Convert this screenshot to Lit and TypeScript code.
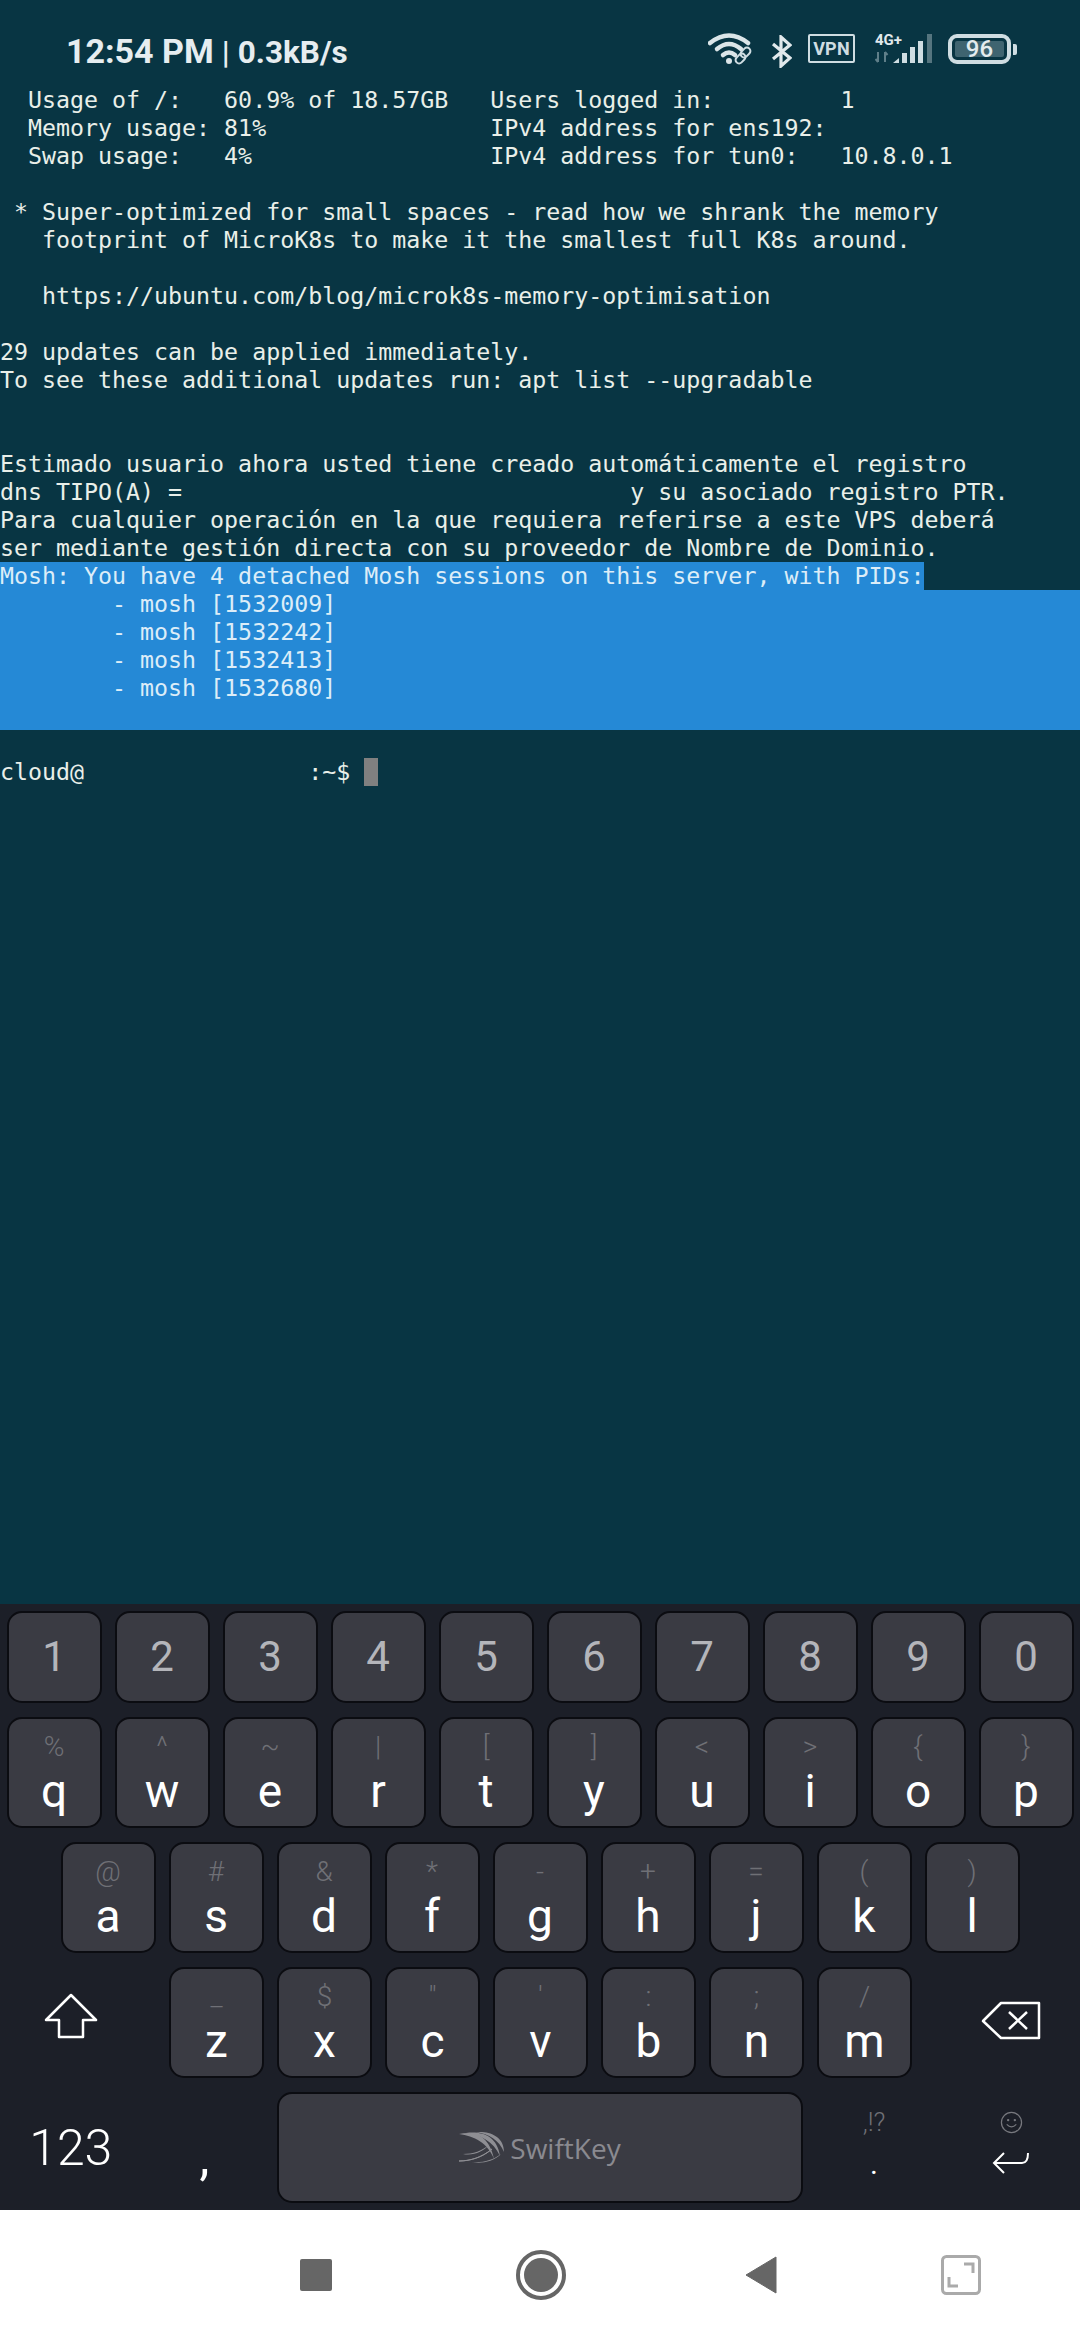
import { LitElement, html, css } from "lit";
import { customElement } from "lit/decorators.js";

const top = [
  "  Usage of /:   60.9% of 18.57GB   Users logged in:         1",
  "  Memory usage: 81%                IPv4 address for ens192:",
  "  Swap usage:   4%                 IPv4 address for tun0:   10.8.0.1",
  "",
  " * Super-optimized for small spaces - read how we shrank the memory",
  "   footprint of MicroK8s to make it the smallest full K8s around.",
  "",
  "   https://ubuntu.com/blog/microk8s-memory-optimisation",
  "",
  "29 updates can be applied immediately.",
  "To see these additional updates run: apt list --upgradable",
  "",
  "",
  "Estimado usuario ahora usted tiene creado automáticamente el registro",
  "dns TIPO(A) =                                y su asociado registro PTR.",
  "Para cualquier operación en la que requiera referirse a este VPS deberá",
  "ser mediante gestión directa con su proveedor de Nombre de Dominio.",
];
const sel = [
  "        - mosh [1532009]",
  "        - mosh [1532242]",
  "        - mosh [1532413]",
  "        - mosh [1532680]",
  "",
];

const r2: [string, string][] = [["q","%"],["w","^"],["e","~"],["r","|"],["t","["],["y","]"],["u","<"],["i",">"],["o","{"],["p","}"]];
const r3: [string, string][] = [["a","@"],["s","#"],["d","&"],["f","*"],["g","-"],["h","+"],["j","="],["k","("],["l",")"]];
const r4: [string, string][] = [["z","_"],["x","$"],["c","\""],["v","'"],["b",":"],["n",";"],["m","/"]];

@customElement("app-root")
export class AppRoot extends LitElement {
  static styles = css`
    :host { display: block; width: 1080px; height: 2340px; font-family: Roboto, sans-serif; background: #083543; overflow: hidden; }
    .status { height: 86px; box-sizing: border-box; padding: 0 63px 0 66px; display: flex; justify-content: space-between; align-items: flex-start; color: #e6edf0; }
    .clock { margin-top: 28px; font-size: 34px; line-height: 46px; font-weight: 700; white-space: pre; }
    .clock .bar { font-weight: 500; font-size: 32px; margin: 0 8px 0 8px; }
    .clock .rate { font-size: 31.5px; }
    .icons { margin-top: 33px; display: flex; align-items: flex-start; height: 34px; }
    .icons svg { display: block; }
    .bt { margin-left: 17px; margin-top: 2px; }
    .vpn { margin-left: 16px; width: 47px; height: 29px; box-sizing: border-box; border: 2px solid #cfdde2; border-radius: 2px; font-size: 18px; line-height: 25px; font-weight: 700; color: #cfdde2; text-align: center; margin-top: 1px; letter-spacing: 0.2px; }
    .net { margin-left: 20px; position: relative; width: 58px; height: 31px; }
    .net-label { position: absolute; left: 0; top: 0; font-size: 15px; line-height: 15px; font-weight: 700; color: #e1e9ec; }
    .batt { margin-left: 15px; margin-top: 1px; display: flex; align-items: center; }
    .batt-box { width: 63px; height: 30px; box-sizing: border-box; border: 4px solid #cfdde2; border-radius: 9px; padding: 3px; display: flex; }
    .batt-fill { flex: 1; background: #3f6470; border-radius: 2px; color: #e4ecee; font-size: 24px; font-weight: 500; line-height: 16px; text-align: center; }
    .nub { width: 4px; height: 11px; margin-left: 2px; background: #cfdde2; border-radius: 0 2px 2px 0; }
    .term { height: 1518px; box-sizing: border-box; font-family: "DejaVu Sans Mono", monospace; font-size: 23.27px; line-height: 28px; color: #e9efe9; }
    .line { display: block; height: 28px; white-space: pre; }
    .s1 { display: inline-block; background: #2589d6; color: #dcedf8; height: 28px; }
    .s2 { background: #2589d6; color: #dcedf8; }
    .blank { height: 28px; }
    .cursor { display: inline-block; width: 14px; height: 28px; background: #808080; vertical-align: top; }
    .kb { height: 606px; box-sizing: border-box; background: #1c1f28; padding: 7px 0 7px 6.5px; display: flex; flex-direction: column; gap: 14px; }
    .row { display: flex; gap: 13px; }
    .row.home { padding-left: 54px; }
    .key { width: 95px; height: 111px; flex: none; box-sizing: border-box; background: #3a3b43; border: 2px solid #0b0c11; border-radius: 15px; display: flex; flex-direction: column; align-items: center; color: #fff; }
    .key.num { height: 92px; justify-content: center; color: #b4b5ba; font-size: 42px; line-height: 50px; font-weight: 400; }
    .hint { height: 39px; margin-top: 10px; font-size: 28px; line-height: 36px; font-weight: 300; color: #6f7076; }
    .letter { font-size: 46px; line-height: 46px; height: 46px; }
    .cell { display: flex; flex: none; align-items: center; justify-content: center; height: 111px; color: #fff; box-sizing: border-box; }
    .shift { width: 149.5px; padding: 0 20px 14px 0; }
    .bksp { width: 148px; padding: 0 0 4px 24px; }
    .n123 { width: 128.5px; font-size: 50px; font-weight: 300; }
    .comma { width: 116px; font-size: 50px; padding: 18px 3px 0 0; }
    .space { width: 526px; height: 111px; flex: none; box-sizing: border-box; background: #3a3b43; border: 2px solid #0b0c11; border-radius: 15px; display: flex; align-items: center; justify-content: center; gap: 5px; color: #8a8a90; font-size: 28px; font-family: "Open Sans", sans-serif; }
    .punct { width: 116px; flex-direction: column; justify-content: flex-start; padding-top: 15px; }
    .punct .h { font-size: 26px; line-height: 30px; font-weight: 300; color: #6f7076; }
    .punct .p { font-size: 30px; line-height: 30px; margin-top: 12px; color: #fff; }
    .enter { width: 132px; flex-direction: column; gap: 17px; padding-bottom: 10px; }
    .enter svg { display: block; }
    .nav { height: 130px; background: #fff; position: relative; display: flex; align-items: center; padding-left: 300px; }
    .nav svg { display: block; }
    .stop { width: 32px; height: 32px; background: #666; border-radius: 2px; }
    .home-b { margin-left: 184px; }
    .back-b { margin-left: 179px; }
    .exp-b { margin-left: 164px; }
  `;

  private key(k: [string, string]) {
    return html`<div class="key"><span class="hint">${k[1]}</span><span class="letter">${k[0]}</span></div>`;
  }

  render() {
    return html`
      <div class="status">
        <div class="clock">12:54 PM<span class="bar">|</span><span class="rate">0.3kB/s</span></div>
        <div class="icons">
          <svg width="46" height="32" viewBox="0 0 46 32" fill="none" stroke="#dbe5e8" stroke-linecap="round">
            <path d="M2 10 Q21 -5 40 10" stroke-width="4.5"/>
            <path d="M9 16 Q21 6 33 16" stroke-width="4.5"/>
            <path d="M15 22 Q21 17 27 22" stroke-width="4.5"/>
            <circle cx="21" cy="28" r="3" fill="#dbe5e8" stroke="none"/>
            <g stroke="#cfdde2" stroke-width="2">
              <rect x="32" y="16" width="11" height="7" rx="3.5" transform="rotate(-45 37.5 19.5)"/>
              <rect x="27" y="22" width="11" height="7" rx="3.5" transform="rotate(-45 32.5 25.5)"/>
            </g>
          </svg>
          <svg class="bt" width="21" height="33" viewBox="0 0 21 33" fill="none" stroke="#e1e9ec" stroke-width="3.2">
            <path d="M2 9 L19 23 L10 31 V2 L19 10 L2 24"/>
          </svg>
          <div class="vpn">VPN</div>
          <div class="net">
            <span class="net-label">4G+</span>
            <svg width="58" height="31" viewBox="0 0 58 31">
              <path d="M3 19 V29 M3 29 l-2.5 -3 M10 29 V19 M10 19 l2.5 3" stroke="#5f7f89" stroke-width="2" fill="none"/>
              <path d="M18 30 L24 25 V30 Z" fill="#cfdde2"/>
              <rect x="27" y="20" width="5" height="10" fill="#cfdde2"/>
              <rect x="35" y="14" width="5" height="16" fill="#cfdde2"/>
              <rect x="43" y="8" width="5" height="22" fill="#cfdde2"/>
              <rect x="52" y="1" width="5" height="29" fill="#55757f"/>
            </svg>
          </div>
          <div class="batt"><div class="batt-box"><div class="batt-fill">96</div></div><div class="nub"></div></div>
        </div>
      </div>
      <div class="term">
        ${top.map((l) => html`<span class="line">${l}</span>`)}
        <span class="line"><span class="s1">Mosh: You have 4 detached Mosh sessions on this server, with PIDs:</span></span>
        ${sel.map((l) => html`<span class="line s2">${l}</span>`)}
        <div class="blank"></div>
        <span class="line">cloud@                :~$ <span class="cursor"></span></span>
      </div>
      <div class="kb">
        <div class="row">${"1234567890".split("").map((n) => html`<div class="key num">${n}</div>`)}</div>
        <div class="row">${r2.map((k) => this.key(k))}</div>
        <div class="row home">${r3.map((k) => this.key(k))}</div>
        <div class="row">
          <div class="cell shift">
            <svg width="54" height="46" viewBox="0 0 54 46" fill="none" stroke="#fff" stroke-width="2.5" stroke-linejoin="round"><path d="M27 2 L52 27 H39 V44 H15 V27 H2 Z"/></svg>
          </div>
          ${r4.map((k) => this.key(k))}
          <div class="cell bksp">
            <svg width="60" height="39" viewBox="0 0 60 39" fill="none" stroke="#fff" stroke-width="2.5" stroke-linejoin="round"><path d="M20 2 H58 V37 H20 L2 20 Z"/><path d="M28 11 L46 28 M46 11 L28 28"/></svg>
          </div>
        </div>
        <div class="row">
          <div class="cell n123">123</div>
          <div class="cell comma">,</div>
          <div class="space">
            <svg width="46" height="31" viewBox="0 0 46 31" fill="#8e8e93">
              <path d="M0 2 C14 -1 30 2 35 27 C29 11 15 4 0 2 Z"/>
              <path d="M7 1 C22 -1 38 3 41 24 C34 9 22 3 7 1 Z"/>
              <path d="M17 0 C30 -1 45 4 45 20 C40 8 30 2 17 0 Z"/>
              <path d="M0 29 C10 29 22 26 33 17 C24 25 12 29 0 29 Z" stroke="#8e8e93"/>
              <path d="M4 22 C14 22 23 19 31 12 C24 20 14 24 4 22 Z"/>
              <path d="M12 30 C24 31 34 28 42 22 C34 30 22 32 12 30 Z"/>
            </svg>
            <span>SwiftKey</span>
          </div>
          <div class="cell punct"><span class="h">,!?</span><span class="p">.</span></div>
          <div class="cell enter">
            <svg width="23" height="23" viewBox="0 0 24 24" fill="none" stroke="#77787e" stroke-width="1.3"><circle cx="12" cy="12" r="10.5"/><path d="M7 14 Q12 19 17 14"/><circle cx="8.5" cy="9.5" r=".6"/><circle cx="15.5" cy="9.5" r=".6"/></svg>
            <svg width="38" height="23" viewBox="0 0 38 23" fill="none" stroke="#fff" stroke-width="2"><path d="M12 2 L2 12 L12 22 M2 12 H30 Q36 12 36 2"/></svg>
          </div>
        </div>
      </div>
      <div class="nav">
        <div class="stop"></div>
        <svg class="home-b" width="50" height="50" viewBox="0 0 50 50"><circle cx="25" cy="25" r="23" fill="none" stroke="#666" stroke-width="4"/><circle cx="25" cy="25" r="17" fill="#666"/></svg>
        <svg class="back-b" width="32" height="38" viewBox="0 0 32 38"><path d="M31 1 V37 L1 19 Z" fill="#666" stroke="#666" stroke-linejoin="round"/></svg>
        <svg class="exp-b" width="40" height="40" viewBox="0 0 40 40" fill="none" stroke="#aaa" stroke-width="3"><rect x="1.5" y="1.5" width="37" height="37" rx="4"/><path d="M23 9 H32 V18 M8 22 V31 H17"/></svg>
      </div>
    `;
  }
}
